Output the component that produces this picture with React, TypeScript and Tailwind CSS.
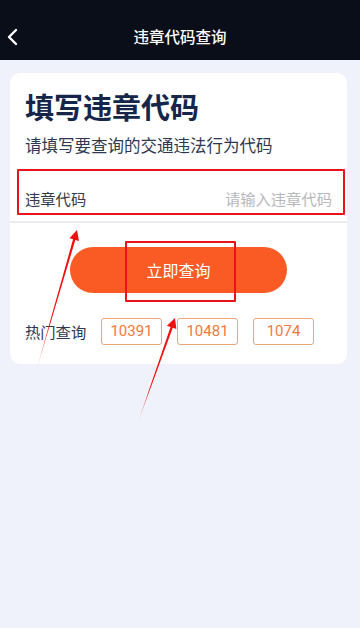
import React from "react";

export default function App() {
  const font = { fontFamily: '"Noto Sans CJK SC", "Noto Sans", sans-serif' };
  return (
    <div className="relative w-[360px] h-[628px] bg-[#eff2fb] overflow-hidden" style={font}>
      <div className="h-[60px] bg-[#0a0e18] pt-[14px]">
        <div className="relative h-[46px] flex items-center justify-center">
          <svg className="absolute left-[6px] top-[14px]" width="13" height="18" viewBox="0 0 13 18">
            <path d="M10 2 L3 9 L10 16" fill="none" stroke="white" strokeWidth="2.4" strokeLinecap="round" strokeLinejoin="round" />
          </svg>
          <span className="text-white text-[15.5px] font-medium leading-none">违章代码查询</span>
        </div>
      </div>

      <div className="mx-[10px] mt-[13px] w-[337px] rounded-[10px] bg-white pb-[19px]">
        <div className="px-[15px] pt-[15px]">
          <div className="text-[29px] leading-[36px] font-bold text-[#16264a]">填写违章代码</div>
          <div className="mt-[9px] text-[16.5px] leading-[24px] text-[#2e3850]">请填写要查询的交通违法行为代码</div>
        </div>
        <div className="mt-[18px] h-[46px] px-[15px] flex items-center justify-between">
          <span className="text-[15.3px] text-[#333a4a] whitespace-nowrap">违章代码</span>
          <span className="text-[15.3px] text-[#b8b8bc] whitespace-nowrap">请输入违章代码</span>
        </div>
        <div className="h-[2px] bg-[#ececf0]" />
        <div className="mt-[24px] flex justify-center">
          <div className="w-[217px] h-[46px] rounded-full bg-[#fa5a23] flex items-center justify-center text-white text-[16px]">
            立即查询
          </div>
        </div>
        <div className="mt-[25px] px-[15px] flex items-center">
          <span className="text-[15.3px] text-[#2c3652] w-[76px] shrink-0 whitespace-nowrap">热门查询</span>
          <div className="flex items-center gap-[15px]">
            {["10391", "10481", "1074"].map((t) => (
              <div
                key={t}
                className="w-[61px] h-[27px] rounded-[3px] border border-[#f0a478] flex items-center justify-center text-[15px] text-[#ef7a3c]"
                style={{ fontFamily: 'Roboto, "Noto Sans", sans-serif' }}
              >
                {t}
              </div>
            ))}
          </div>
        </div>
      </div>

      <div className="absolute left-[17px] top-[169px] w-[328px] h-[46px] border-2 border-[#e8141a] rounded-[1px]" />
      <div className="absolute left-[125px] top-[241px] w-[111px] h-[61px] border-2 border-[#e8141a] rounded-[1px]" />

      <svg className="absolute left-0 top-0 pointer-events-none" width="360" height="628" viewBox="0 0 360 628">
        <defs>
          <linearGradient id="g1" gradientUnits="userSpaceOnUse" x1="35" y1="375" x2="77" y2="230">
            <stop offset="0" stopColor="#f01010" stopOpacity="0" />
            <stop offset="0.35" stopColor="#f01010" stopOpacity="1" />
            <stop offset="1" stopColor="#f01010" stopOpacity="1" />
          </linearGradient>
          <linearGradient id="g2" gradientUnits="userSpaceOnUse" x1="137" y1="425" x2="175" y2="318">
            <stop offset="0" stopColor="#f01010" stopOpacity="0" />
            <stop offset="0.35" stopColor="#f01010" stopOpacity="1" />
            <stop offset="1" stopColor="#f01010" stopOpacity="1" />
          </linearGradient>
        </defs>
        <polygon
          points="35,375 73.05,239.27 69.4,238.2 77,230 79,241 75.35,239.93"
          fill="url(#g1)"
        />
        <polygon
          points="137,425 170.52,327.03 166.93,325.76 175,318 176.37,329.1 172.78,327.83"
          fill="url(#g2)"
        />
      </svg>
    </div>
  );
}
